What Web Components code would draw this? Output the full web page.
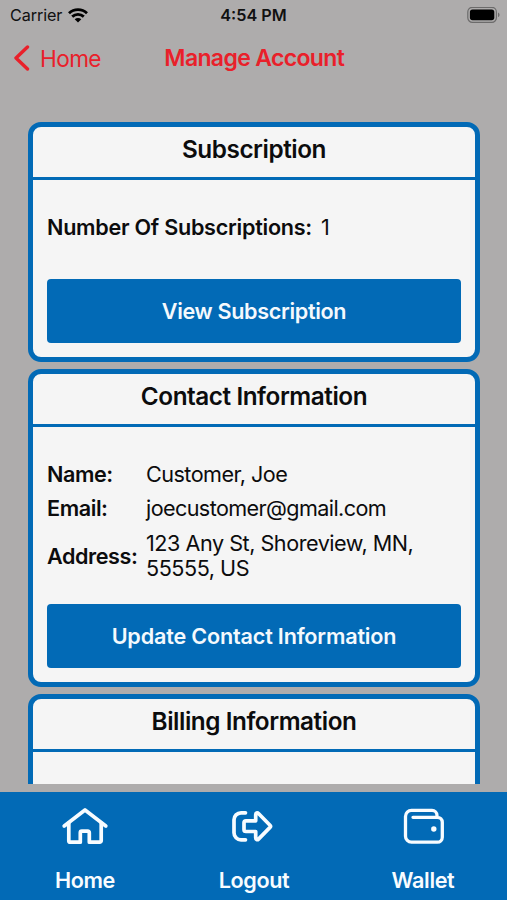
<!DOCTYPE html>
<html lang="en">
<head>
<meta charset="utf-8">
<title>Manage Account</title>
<style>
  html, body {
    height: 100%;
    margin: 0;
  }

  body {
    --blue: #026ab6;
    --red: #e9202a;
    --panel: #f5f5f5;
    background: #aeacac;
    color: #0c0c0d;
    font-family: Inter, "Liberation Sans", sans-serif;
    font-size: 21.6px;
    overflow: hidden;
  }
</style>
</head>
<body>
<account-screen>
  <status-bar slot="top" carrier="Carrier" time="4:54 PM"></status-bar>
  <nav-header slot="top" back="Home">Manage Account</nav-header>

  <info-card heading="Subscription">
    <info-row class="count" label="Number Of Subscriptions:">1</info-row>
    <action-button slot="action" style="letter-spacing: -0.33px">View Subscription</action-button>
  </info-card>
  <info-card heading="Contact Information">
    <info-row label="Name:">Customer, Joe</info-row>
    <info-row label="Email:" style="--value-spacing: -0.6px">joecustomer@gmail.com</info-row>
    <info-row label="Address:" style="--value-spacing: -0.47px">123 Any St, Shoreview, MN, 55555, US</info-row>
    <action-button slot="action">Update Contact Information</action-button>
  </info-card>
  <info-card heading="Billing Information"></info-card>

  <tab-bar slot="bottom">
    <tab-item icon="home">Home</tab-item>
    <tab-item icon="logout">Logout</tab-item>
    <tab-item icon="wallet">Wallet</tab-item>
  </tab-bar>
</account-screen>

<script>
  const attach = (element, html) => {
    const template = document.createElement('template');
    template.innerHTML = html;
    element.attachShadow({ mode: 'open' });
    element.shadowRoot.appendChild(template.content.cloneNode(true));
  };

  class AccountScreen extends HTMLElement {
    constructor() {
      super();
      attach(this, `
      <style>
        :host {
          display: flex;
          flex-direction: column;
          height: 900px;
        }
        main {
          flex: 1;
          min-height: 0;
          overflow: hidden;
          display: flex;
          flex-direction: column;
          gap: 7px;
          padding: 0 27px 0 28px;
          margin: 36px 0 8px;
        }
      </style>
      <slot name="top"></slot>
      <main><slot></slot></main>
      <slot name="bottom"></slot>`);
    }
  }

  class StatusBar extends HTMLElement {
    constructor() {
      super();
      attach(this, `
      <style>
        :host {
          display: grid;
          grid-template-columns: 1fr auto 1fr;
          align-items: center;
          height: 30px;
          padding: 0 7px 0 10px;
          font-size: 16.2px;
          color: #111;
        }
        .left {
          display: flex;
          align-items: center;
          gap: 6px;
        }
        .carrier { letter-spacing: -0.1px; }
        .time {
          font-weight: 600;
          margin-right: 3px;
        }
        .battery { justify-self: end; }
        svg { display: block; }
      </style>
      <div class="left">
        <span class="carrier"></span>
        <svg width="20" height="15" viewBox="0 0 20 15" fill="none" stroke="#000" stroke-width="2.8">
          <path d="M1 5.200C6 .4 14 .4 19 5.200"/>
          <path d="M4.200 8.600c3.400-3.100 8.200-3.100 11.600 0"/>
          <path d="M10 14.600l-3.300-3.300c1.800-1.700 4.800-1.700 6.600 0z" fill="#000" stroke="none"/>
        </svg>
      </div>
      <span class="time"></span>
      <svg class="battery" width="33" height="17" viewBox="0 0 33 17">
        <rect x=".8" y=".3" width="28.600" height="15" rx="4.600" fill="none" stroke="#6c6b6b" stroke-width="1.200"/>
        <rect x="2.900" y="2.400" width="24.400" height="10.800" rx="2.600" fill="#000"/>
        <path d="M31 5.500c2 .8 2 3.800 0 4.600z" fill="#6c6b6b"/>
      </svg>`);
    }
    connectedCallback() {
      this.shadowRoot.querySelector('.carrier').textContent = this.getAttribute('carrier');
      this.shadowRoot.querySelector('.time').textContent = this.getAttribute('time');
    }
  }

  class NavHeader extends HTMLElement {
    constructor() {
      super();
      attach(this, `
      <style>
        :host {
          display: grid;
          grid-template-columns: 1fr auto 1fr;
          align-items: center;
          height: 56px;
          padding: 0 11px 0 12.5px;
          color: var(--red);
          font-size: 23px;
        }
        .back {
          display: flex;
          align-items: center;
          gap: 10.5px;
          font-size: 22.6px;
          letter-spacing: -0.6px;
        }
        .title {
          font-weight: 600;
          letter-spacing: -0.65px;
        }
      </style>
      <div class="back">
        <svg width="17" height="26" viewBox="0 0 17 26" fill="none" stroke="currentColor" stroke-width="3.4" stroke-linecap="round" stroke-linejoin="round">
          <path d="M14.500 2L3 13l11.500 11"/>
        </svg>
        <span class="label"></span>
      </div>
      <span class="title"><slot></slot></span>`);
    }
    connectedCallback() {
      this.shadowRoot.querySelector('.label').textContent = this.getAttribute('back');
    }
  }

  class InfoCard extends HTMLElement {
    constructor() {
      super();
      attach(this, `
      <style>
        :host {
          display: block;
          flex: none;
          box-sizing: border-box;
          min-height: 240px;
          border: 5px solid var(--blue);
          border-radius: 13px;
          background: var(--panel);
        }
        h2 {
          margin: 0;
          height: 50px;
          line-height: 45px;
          border-bottom: 3px solid var(--blue);
          font-size: 24.3px;
          font-weight: 600;
          text-align: center;
          letter-spacing: -0.44px;
        }
        .body {
          display: flex;
          flex-direction: column;
          padding: 30.5px 14px 14px;
        }
        .rows {
          display: flex;
          flex-direction: column;
        }
        ::slotted(action-button) { margin-top: 17px; }
      </style>
      <h2></h2>
      <div class="body">
        <div class="rows"><slot></slot></div>
        <slot name="action"></slot>
      </div>`);
    }
    connectedCallback() {
      this.shadowRoot.querySelector('h2').textContent = this.getAttribute('heading');
    }
  }

  class InfoRow extends HTMLElement {
    constructor() {
      super();
      attach(this, `
      <style>
        :host {
          display: flex;
          align-items: center;
          padding: 4.3px 0;
          line-height: 25.8px;
        }
        .label {
          width: 99px;
          font-weight: 600;
          white-space: nowrap;
          letter-spacing: -0.42px;
        }
        .value {
          flex: 1;
          padding-right: 30px;
          letter-spacing: var(--value-spacing, -0.53px);
        }
        :host(.count) { padding: 4.3px 0 21px; }
        :host(.count) .label {
          width: auto;
          margin-right: 9px;
          letter-spacing: -0.26px;
        }
      </style>
      <span class="label"></span>
      <span class="value"><slot></slot></span>`);
    }
    connectedCallback() {
      this.shadowRoot.querySelector('.label').textContent = this.getAttribute('label');
    }
  }

  class ActionButton extends HTMLElement {
    constructor() {
      super();
      attach(this, `
      <style>
        :host {
          display: flex;
          align-items: center;
          justify-content: center;
          height: 64.5px;
          border-radius: 4px;
          background: var(--blue);
          color: #f4f9fd;
          font-weight: 600;
          letter-spacing: -0.18px;
        }
      </style>
      <slot></slot>`);
    }
  }

  class TabBar extends HTMLElement {
    constructor() {
      super();
      attach(this, `
      <style>
        :host {
          display: grid;
          grid-template-columns: repeat(3, 1fr);
          flex: none;
          height: 108px;
          background: var(--blue);
        }
      </style>
      <slot></slot>`);
    }
  }

  const icons = {
    home: `
      <path d="M2.200 19L23 3l20.800 16"/>
      <path d="M6.800 16V33.700a1.500 1.500 0 0 0 1.500 1.500H18.300V25.700a1.500 1.500 0 0 1 1.500-1.500h6a1.500 1.500 0 0 1 1.500 1.500V35.200H37.700a1.500 1.500 0 0 0 1.500-1.500V16"/>`,
    logout: `
      <path d="M14.500 5.800H10a7 7 0 0 0-7 7v13a7 7 0 0 0 7 7h4.500"/>
      <path d="M24.700 13.800V7.800c0-1.900 1.600-2.500 2.800-1.300L39 18.200c.8.800.8 1.400 0 2.200L27.500 32.100c-1.200 1.200-2.800.6-2.800-1.300V24.500H15a2 2 0 0 1-2-2v-6.700a2 2 0 0 1 2-2z"/>`,
    wallet: `
      <path d="M13 10.300H37.300a5 5 0 0 1 5 5V30.200a5 5 0 0 1-5 5H11.500a6 6 0 0 1-6-6V9.400a6 6 0 0 1 6-6H32a5 5 0 0 1 5 5v1.900" stroke-width="3.300"/>
      <circle cx="33.800" cy="22" r="2.700" fill="currentColor" stroke="none"/>`
  };

  class TabItem extends HTMLElement {
    constructor() {
      super();
      attach(this, `
      <style>
        :host {
          display: flex;
          flex-direction: column;
          align-items: center;
          padding-top: 15px;
          color: #f8fcff;
          font-weight: 600;
          line-height: 26px;
          letter-spacing: -0.36px;
        }
        svg {
          width: 46px;
          height: 40px;
          margin-bottom: 20px;
          overflow: visible;
        }
        span { padding-left: 1px; }
      </style>
      <svg viewBox="0 0 46 40" fill="none" stroke="currentColor" stroke-width="3.7" stroke-linecap="round" stroke-linejoin="round"></svg>
      <span><slot></slot></span>`);
    }
    connectedCallback() {
      this.shadowRoot.querySelector('svg').innerHTML = icons[this.getAttribute('icon')];
    }
  }

  window.customElements.define('account-screen', AccountScreen);
  window.customElements.define('status-bar', StatusBar);
  window.customElements.define('nav-header', NavHeader);
  window.customElements.define('info-card', InfoCard);
  window.customElements.define('info-row', InfoRow);
  window.customElements.define('action-button', ActionButton);
  window.customElements.define('tab-bar', TabBar);
  window.customElements.define('tab-item', TabItem);
</script>
</body>
</html>
